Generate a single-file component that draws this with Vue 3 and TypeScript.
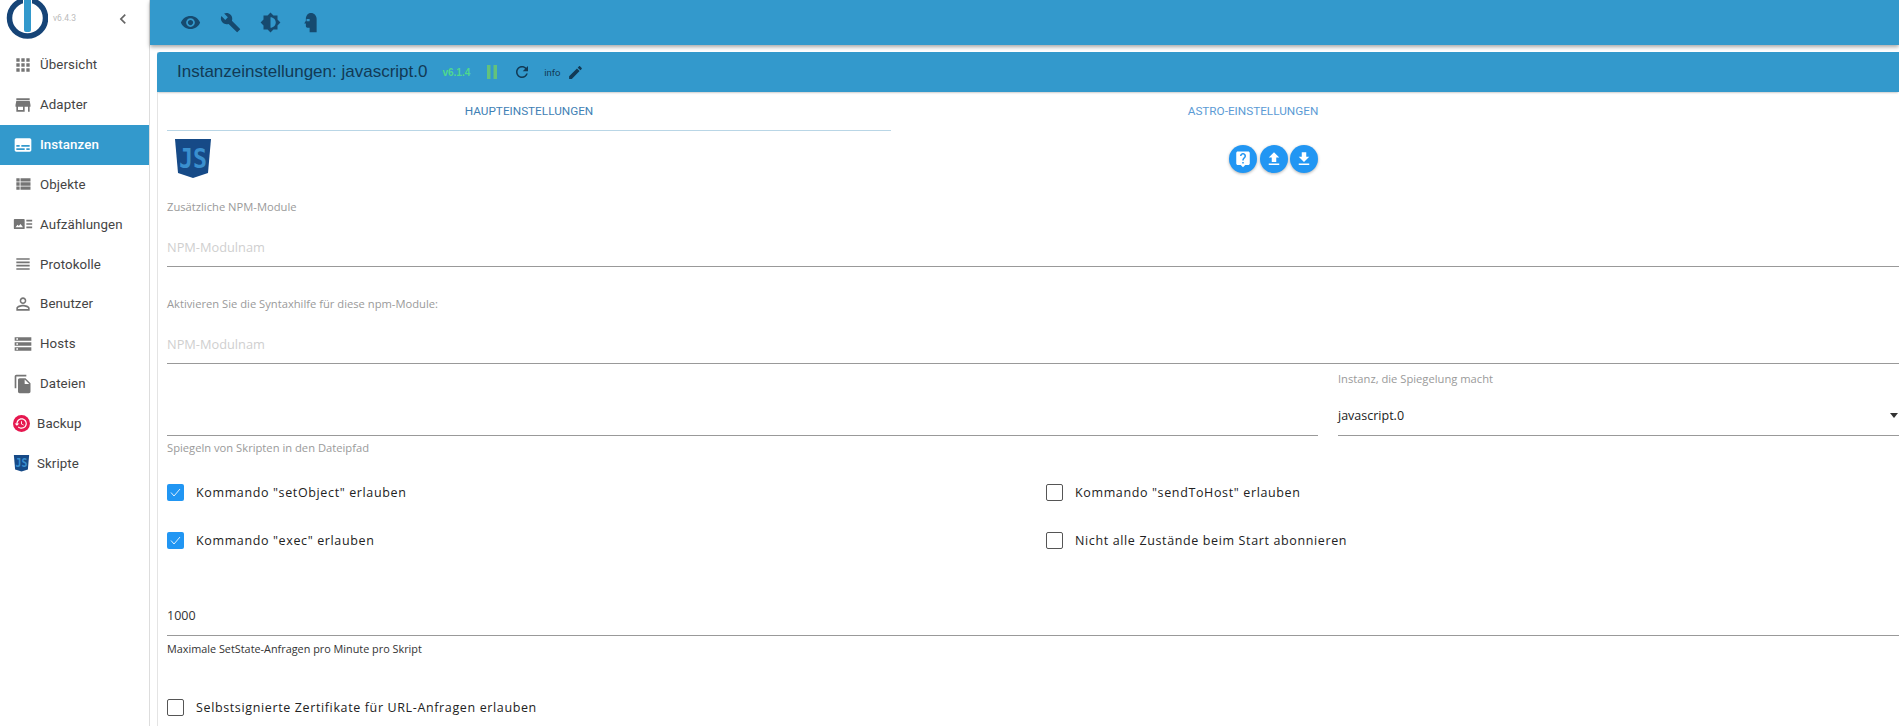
<script setup lang="ts">
interface NavItem { label: string; d: string; cls?: string }
const nav: NavItem[] = [
  { label: 'Übersicht', d: 'M4 8h4V4H4v4zm6 12h4v-4h-4v4zm-6 0h4v-4H4v4zm0-6h4v-4H4v4zm6 0h4v-4h-4v4zm6-10v4h4V4h-4zm-6 4h4V4h-4v4zm6 6h4v-4h-4v4zm0 6h4v-4h-4v4z' },
  { label: 'Adapter', d: 'M20 4H4v2h16V4zm1 10v-2l-1-5H4l-1 5v2h1v6h10v-6h4v6h2v-6h1zm-9 4H6v-4h6v4z' },
  { label: 'Instanzen', cls: 'active', d: 'M20 4H4c-1.1 0-2 .9-2 2v12c0 1.1.9 2 2 2h16c1.1 0 2-.9 2-2V6c0-1.1-.9-2-2-2zM4 12h4v2H4v-2zm10 6H4v-2h10v2zm6 0h-4v-2h4v2zm0-4H10v-2h10v2z' },
  { label: 'Objekte', d: 'M4 14h4v-4H4v4zm0 5h4v-4H4v4zM4 9h4V5H4v4zm5 5h12v-4H9v4zm0 5h12v-4H9v4zM9 5v4h12V5H9z' },
  { label: 'Aufzählungen', d: 'M2 6h11a1 1 0 0 1 1 1v10a1 1 0 0 1-1 1H2a1 1 0 0 1-1-1V7a1 1 0 0 1 1-1zm1 10h9l-3-4-2 2.5L5.500 13zM16 7h7v2h-7zm0 4h7v2h-7zm0 4h7v2h-7z' },
  { label: 'Protokolle', d: 'M4 15h16v-2H4v2zm0 4h16v-2H4v2zm0-8h16V9H4v2zm0-6v2h16V5H4z' },
  { label: 'Benutzer', d: 'M12 5.900c1.160 0 2.100.940 2.100 2.100s-.940 2.100-2.100 2.100S9.900 9.160 9.900 8s.940-2.100 2.100-2.100m0 9c2.970 0 6.100 1.460 6.100 2.100v1.100H5.900V17c0-.640 3.130-2.100 6.100-2.100M12 4C9.790 4 8 5.790 8 8s1.790 4 4 4 4-1.790 4-4-1.790-4-4-4zm0 9c-2.670 0-8 1.340-8 4v3h16v-3c0-2.660-5.330-4-8-4z' },
  { label: 'Hosts', d: 'M2 20h20v-4H2v4zm2-3h2v2H4v-2zM2 4v4h20V4H2zm4 3H4V5h2v2zm-4 7h20v-4H2v4zm2-3h2v2H4v-2z' },
  { label: 'Dateien', d: 'M16 1H4c-1.100 0-2 .9-2 2v14h2V3h12V1zm-1 4l6 6v10c0 1.100-.9 2-2 2H7.990C6.890 23 6 22.100 6 21l.01-14c0-1.100.89-2 1.990-2h7zm-1 7h5.500L14 6.500V12z' },
]
const shield = 'M0 0H36L33 34 18 39 3 34Z'
const toolbar: string[] = [
  'M12 4.500C7 4.500 2.730 7.610 1 12c1.730 4.390 6 7.500 11 7.500s9.270-3.110 11-7.500c-1.730-4.390-6-7.500-11-7.500zM12 17c-2.760 0-5-2.240-5-5s2.240-5 5-5 5 2.240 5 5-2.240 5-5 5zm0-8c-1.660 0-3 1.340-3 3s1.340 3 3 3 3-1.340 3-3-1.340-3-3-3z',
  'M22.700 19l-9.100-9.100c.9-2.300.4-5-1.500-6.900-2-2-5-2.400-7.400-1.300L9 6 6 9 1.600 4.700C.4 7.100.9 10.100 2.900 12.100c1.900 1.900 4.600 2.400 6.900 1.500l9.100 9.100c.4.4 1 .4 1.400 0l2.300-2.300c.5-.4.5-1.100.1-1.400z',
  'M20 15.310L23.310 12 20 8.690V4h-4.690L12 .69 8.690 4H4v4.690L.69 12 4 15.310V20h4.690L12 23.310 15.310 20H20v-4.690zM12 18V6c3.310 0 6 2.690 6 6s-2.690 6-6 6z',
  'M12.500 1c3.800 0 6.500 3 6.500 7v15h-8v-5H8.500c-1 0-1.800-.8-1.800-2v-3H4.800L6.700 10V8c0-4 2.300-7 5.800-7zM7.500 8v2.500H11V8z',
]
const checks = [
  [{ label: 'Kommando "setObject" erlauben', on: true }, { label: 'Kommando "sendToHost" erlauben', on: false }],
  [{ label: 'Kommando "exec" erlauben', on: true }, { label: 'Nicht alle Zustände beim Start abonnieren', on: false }],
]
</script>

<template>
  <div class="page">
    <aside class="side">
      <div class="brand">
        <svg class="logo" viewBox="0 0 48 42" width="48" height="42">
          <circle cx="27.500" cy="18" r="18" fill="none" stroke="#164477" stroke-width="5.500" />
          <rect x="23" y="-3" width="9" height="35" rx="3" fill="#fff" />
          <rect x="24" y="-3" width="7" height="35" rx="2" fill="#3399cc" />
        </svg>
        <span class="ver">v6.4.3</span>
        <svg class="chev" viewBox="0 0 24 24" width="20" height="20"><path d="M15.410 7.410 14 6l-6 6 6 6 1.410-1.410L10.830 12z" /></svg>
      </div>
      <nav class="nav">
        <a v-for="n in nav" :key="n.label" class="item" :class="n.cls">
          <svg viewBox="0 0 24 24" width="20" height="20"><path :d="n.d" /></svg>
          <span>{{ n.label }}</span>
        </a>
        <a class="item sub">
          <svg viewBox="0 0 24 24" width="17" height="17">
            <circle cx="12" cy="12" r="12" fill="#e6174f" />
            <path fill="#fff" transform="translate(1.500 2.200) scale(.82)" d="M13 3c-4.970 0-9 4.030-9 9H1l3.890 3.890.07.14L9 12H6c0-3.870 3.130-7 7-7s7 3.130 7 7-3.130 7-7 7c-1.930 0-3.680-.79-4.940-2.060l-1.420 1.420C8.270 19.990 10.510 21 13 21c4.970 0 9-4.030 9-9s-4.030-9-9-9zm-1 5v5l4.280 2.540.72-1.210-3.500-2.080V8H12z" />
          </svg>
          <span>Backup</span>
        </a>
        <a class="item sub">
          <svg viewBox="0 0 36 40" width="17" height="17">
            <path :d="shield" fill="#164a87" />
            <text x="18" y="29" class="js" textLength="28" lengthAdjust="spacingAndGlyphs">JS</text>
          </svg>
          <span>Skripte</span>
        </a>
      </nav>
    </aside>

    <main class="main">
      <header class="top">
        <svg v-for="(d, i) in toolbar" :key="i" viewBox="0 0 24 24" width="21" height="21"><path :d="d" /></svg>
      </header>
      <section class="card">
        <div class="head">
          <h1>Instanzeinstellungen: javascript.0</h1>
          <span class="hver">v6.1.4</span>
          <svg class="pause" viewBox="0 0 10 14" width="10" height="14"><path d="M0 0h3.500v14H0zM6.500 0H10v14H6.500z" /></svg>
          <svg class="ref" viewBox="0 0 24 24" width="18" height="18"><path d="M17.650 6.350C16.200 4.900 14.210 4 12 4c-4.420 0-7.990 3.580-7.990 8s3.570 8 7.990 8c3.730 0 6.840-2.550 7.730-6h-2.080c-.82 2.330-3.040 4-5.650 4-3.310 0-6-2.690-6-6s2.690-6 6-6c1.660 0 3.140.69 4.220 1.780L13 11h7V4l-2.350 2.350z" /></svg>
          <span class="info">info</span>
          <svg class="edit" viewBox="0 0 24 24" width="17" height="17"><path d="M3 17.250V21h3.750L17.810 9.940l-3.750-3.750L3 17.250zM20.710 7.040c.39-.39.39-1.020 0-1.410l-2.340-2.340c-.39-.39-1.020-.39-1.410 0l-1.830 1.830 3.750 3.750 1.830-1.830z" /></svg>
        </div>
        <div class="body">
          <div class="tabs">
            <div class="tab on">HAUPTEINSTELLUNGEN</div>
            <div class="tab">ASTRO-EINSTELLUNGEN</div>
          </div>
          <div class="logorow">
            <svg viewBox="0 0 36 40" width="36" height="40">
              <path :d="shield" fill="#164a87" />
              <text x="18" y="29" class="js" textLength="28" lengthAdjust="spacingAndGlyphs">JS</text>
            </svg>
            <div class="fabs">
              <button class="fab"><svg viewBox="0 0 24 24" width="18" height="18"><path d="M19 2H5c-1.100 0-2 .9-2 2v14c0 1.100.9 2 2 2h4l3 3 3-3h4c1.100 0 2-.9 2-2V4c0-1.100-.9-2-2-2zm-6 16h-2v-2h2v2zm2.070-7.750l-.9.92C13.450 11.900 13 12.500 13 14h-2v-.5c0-1.100.45-2.100 1.170-2.830l1.240-1.260c.37-.36.59-.86.59-1.410 0-1.100-.9-2-2-2s-2 .9-2 2H8c0-2.210 1.790-4 4-4s4 1.790 4 4c0 .88-.36 1.680-.93 2.250z" /></svg></button>
              <button class="fab"><svg viewBox="0 0 24 24" width="18" height="18"><path d="M9 16h6v-6h4l-7-7-7 7h4zm-4 2h14v2H5z" /></svg></button>
              <button class="fab"><svg viewBox="0 0 24 24" width="18" height="18"><path d="M19 9h-4V3H9v6H5l7 7 7-7zM5 18v2h14v-2H5z" /></svg></button>
            </div>
          </div>

          <div class="lbl first">Zusätzliche NPM-Module</div>
          <div class="input ph">NPM-Modulnam</div>
          <div class="lbl second">Aktivieren Sie die Syntaxhilfe für diese npm-Module:</div>
          <div class="input ph">NPM-Modulnam</div>

          <div class="mirror">
            <div class="mcol">
              <div class="input blank"></div>
              <div class="lbl help">Spiegeln von Skripten in den Dateipfad</div>
            </div>
            <div class="scol">
              <div class="lbl">Instanz, die Spiegelung macht</div>
              <div class="input select">
                <span>javascript.0</span>
                <i class="caret"></i>
              </div>
            </div>
          </div>

          <div class="checks">
            <div v-for="(row, r) in checks" :key="r" class="crow">
              <label v-for="c in row" :key="c.label" class="check">
                <span class="box" :class="{ on: c.on }">
                  <svg v-if="c.on" viewBox="0 0 17 17" width="17" height="17"><path d="M4 8.500 7 12 13 5" fill="none" stroke="#dff0fd" stroke-width="1" /></svg>
                </span>
                <span>{{ c.label }}</span>
              </label>
            </div>
          </div>

          <div class="input val">1000</div>
          <div class="lbl dark">Maximale SetState-Anfragen pro Minute pro Skript</div>

          <label class="check last">
            <span class="box"></span>
            <span>Selbstsignierte Zertifikate für URL-Anfragen erlauben</span>
          </label>
        </div>
      </section>
    </main>
  </div>
</template>

<style>
html, body { margin: 0; height: 726px; overflow: hidden; background: #fff; }
</style>

<style scoped>
.page { display: flex; width: 1899px; height: 726px; overflow: hidden; font-family: Roboto, "Liberation Sans", sans-serif; color: #222; }
.side { width: 149px; flex: none; border-right: 1px solid #ddd; }
.brand { height: 45px; display: flex; align-items: flex-start; overflow: hidden; }
.logo { flex: none; }
.ver { font-size: 8.500px; color: #bbb; margin: 13px 0 0 5px; }
.chev { fill: #666; margin: 9px 0 0 37px; }
.nav { display: flex; flex-direction: column; }
.item { height: 39.850px; display: flex; align-items: center; padding-left: 13px; gap: 7px; font-size: 13.300px; color: #444; letter-spacing: .1px; }
.item svg { fill: #757575; flex: none; }
.item.active { background: #3399cc; color: #fff; font-weight: 500; }
.item.active svg { fill: #fff; }
.item.sub { gap: 7px; }
.js { font: 700 27px "DejaVu Sans Mono", monospace; fill: #3a8fce; text-anchor: middle; }
.main { flex: 1; min-width: 0; display: flex; flex-direction: column; }
.top { height: 45px; flex: none; background: #3399cc; box-shadow: 0 2px 4px rgba(0,0,0,.35); display: flex; align-items: center; padding-left: 30px; gap: 19px; margin-bottom: 7px; }
.top svg { fill: #164a6f; }
.card { margin-left: 7px; flex: 1; min-width: 0; border-left: 1px solid #e4e4e4; }
.head { height: 40px; margin-left: -1px; background: #3399cc; border-radius: 3px 0 0 0; display: flex; align-items: center; padding-left: 20px; box-shadow: 0 2px 2px -1px rgba(0,0,0,.2); }
.head h1 { margin: 0; font: 400 17px "Liberation Sans", Arial, sans-serif; color: #123a55; }
.hver { font: 700 10px "Liberation Sans", sans-serif; color: #4fd88f; margin-left: 15px; }
.pause { fill: #63c27c; margin-left: 17px; }
.ref { fill: #123a55; margin-left: 16px; }
.info { font-size: 9.500px; color: #123a55; margin-left: 13px; }
.edit { fill: #123a55; margin-left: 6px; }
.body { padding-left: 9px; }
.tabs { display: flex; height: 39px; }
.tab { width: 724px; text-align: center; font-size: 11.750px; line-height: 38px; color: #5b9bd5; box-sizing: border-box; }
.tab.on { border-bottom: 1px solid #b9d6e6; color: #3f81b5; }
.logorow { height: 46px; display: flex; align-items: flex-start; padding: 8px 0 0 8px; box-sizing: border-box; }
.fabs { display: flex; gap: 2.500px; margin: 6px 0 0 1018px; }
.fab { width: 28px; height: 28px; border: 0; padding: 0; border-radius: 50%; background: #2196f3; display: flex; align-items: center; justify-content: center; box-shadow: 0 1px 3px rgba(0,0,0,.3); }
.fab svg { fill: #fff; }
.lbl { font: 400 11.200px "Open Sans", sans-serif; color: #9a9a9a; }
.lbl.first { margin-top: 22px; line-height: 16px; }
.lbl.second { margin-top: 29px; line-height: 16px; }
.input { border-bottom: 1px solid #999; box-sizing: border-box; }
.ph { color: #cfcfcf; font-family: "Open Sans", sans-serif; font-size: 12.800px; margin-top: 8px; height: 44px; line-height: 48px; }
.mirror { display: flex; gap: 20px; }
.mcol { flex: 1; min-width: 0; }
.scol { width: 561px; flex: none; padding-top: 7px; }
.blank { height: 72px; }
.help { margin-top: 4px; }
.select { display: flex; justify-content: space-between; align-items: center; height: 50px; padding: 10px 1px 0 0; font-family: "Open Sans", sans-serif; font-size: 12.500px; color: #222; }
.caret { width: 0; height: 0; border: 4px solid transparent; border-top: 5px solid #333; border-bottom: 0; }
.checks { margin-top: 29px; display: flex; flex-direction: column; gap: 31px; }
.crow { display: flex; }
.crow .check { flex: 0 0 879px; }
.check { display: flex; align-items: center; height: 17px; gap: 12px; font: 400 12.500px "Open Sans", sans-serif; letter-spacing: .63px; color: #222; }
.box { width: 17px; height: 17px; box-sizing: border-box; border: 1px solid #555; border-radius: 2px; flex: none; }
.box.on { background: #2196f3; border: 0; }
.box svg { display: block; }
.val { margin-top: 44px; height: 43px; font-family: "Open Sans", sans-serif; font-size: 12.500px; line-height: 46px; color: #333; }
.dark { color: #333; margin-top: 5px; line-height: 16px; font-size: 10.850px; }
.last { margin-top: 42px; }
</style>
